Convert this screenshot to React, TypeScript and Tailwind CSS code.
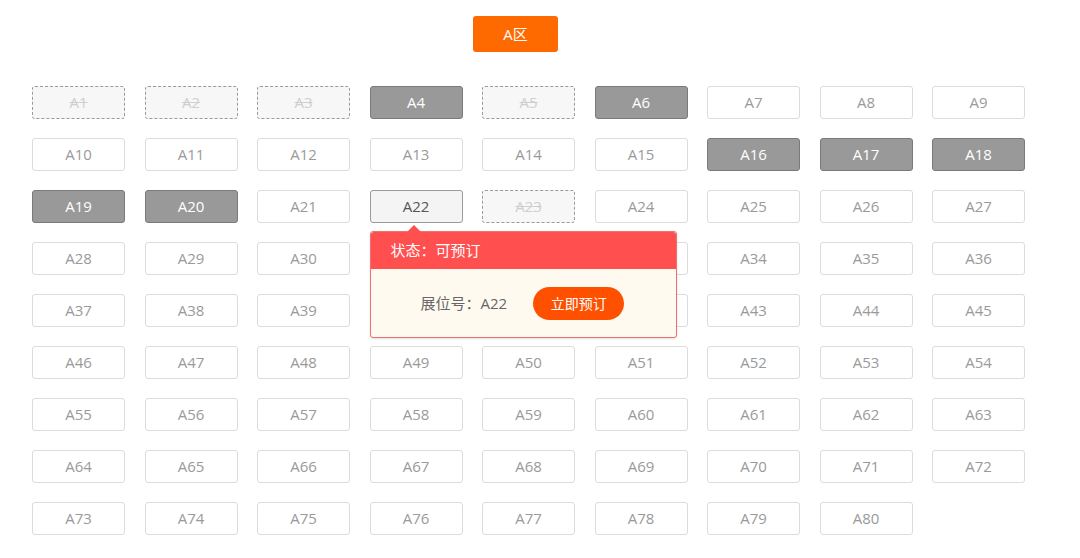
import React from "react";

const booked = new Set([4, 6, 16, 17, 18, 19, 20]);
const disabled = new Set([1, 2, 3, 5, 23]);
const selected = 22;

function Cell({ n }: { n: number }) {
  const label = "A" + n;
  let cls = "h-[33px] flex items-center justify-center rounded-[3px] text-[15px] ";
  if (booked.has(n)) cls += "bg-[#999999] border border-[#7a7a7a] text-white";
  else if (disabled.has(n)) cls += "bg-[#f7f7f7] border border-dashed border-[#9a9a9a] text-[#cfcfcf] line-through";
  else if (n === selected) cls += "bg-[#f4f4f4] border border-[#9a9a9a] text-[#555555]";
  else cls += "bg-white border border-[#dcdcdc] text-[#9a9a9a]";
  return (
    <div className="relative">
      <div className={cls}>{label}</div>
      {n === selected && (
        <div className="absolute left-0 top-[41px] z-10 w-[307px] rounded-[3px] border border-[#f07070] bg-[#fffaf0] shadow-sm">
          <div className="absolute left-[36px] -top-[7px] h-0 w-0 border-x-[7px] border-b-[7px] border-x-transparent border-b-[#ff4f4f]" />
          <div className="h-[37px] rounded-t-[3px] bg-[#ff4f4f] pl-[20px] flex items-center text-white text-[15px]">状态：可预订</div>
          <div className="h-[68px] flex items-center pl-[50px] gap-[26px]">
            <span className="text-[#666666] text-[15px]">展位号：A22</span>
            <button className="h-[33px] w-[91px] rounded-full bg-[#ff5000] text-white text-[14px]">立即预订</button>
          </div>
        </div>
      )}
    </div>
  );
}

export default function App() {
  const nums = Array.from({ length: 80 }, (_, i) => i + 1);
  return (
    <div className="w-[1080px] h-[558px] bg-white overflow-hidden" style={{ fontFamily: '"Open Sans", "Noto Sans CJK SC", sans-serif' }}>
      <div className="pt-[16px] pl-[473px]">
        <div className="w-[85px] h-[36px] rounded-[3px] bg-[#ff6a00] text-white text-[15px] flex items-center justify-center">A区</div>
      </div>
      <div className="mt-[34px] ml-[32px] grid grid-cols-[repeat(9,93px)] gap-x-[19.5px] gap-y-[19px]">
        {nums.map((n) => (
          <Cell key={n} n={n} />
        ))}
      </div>
    </div>
  );
}
